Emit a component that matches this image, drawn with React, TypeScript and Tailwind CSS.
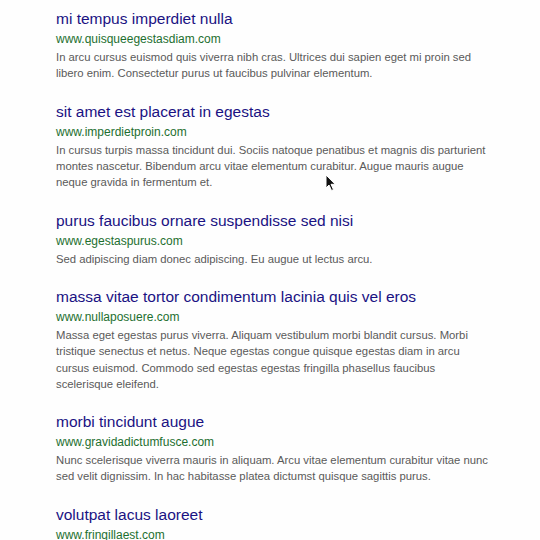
import React from "react";

const items = [
  {
    title: "mi tempus imperdiet nulla",
    url: "www.quisqueegestasdiam.com",
    body: [
      "In arcu cursus euismod quis viverra nibh cras. Ultrices dui sapien eget mi proin sed",
      "libero enim. Consectetur purus ut faucibus pulvinar elementum.",
    ],
  },
  {
    title: "sit amet est placerat in egestas",
    url: "www.imperdietproin.com",
    body: [
      "In cursus turpis massa tincidunt dui. Sociis natoque penatibus et magnis dis parturient",
      "montes nascetur. Bibendum arcu vitae elementum curabitur. Augue mauris augue",
      "neque gravida in fermentum et.",
    ],
  },
  {
    title: "purus faucibus ornare suspendisse sed nisi",
    url: "www.egestaspurus.com",
    body: ["Sed adipiscing diam donec adipiscing. Eu augue ut lectus arcu."],
  },
  {
    title: "massa vitae tortor condimentum lacinia quis vel eros",
    url: "www.nullaposuere.com",
    body: [
      "Massa eget egestas purus viverra. Aliquam vestibulum morbi blandit cursus. Morbi",
      "tristique senectus et netus. Neque egestas congue quisque egestas diam in arcu",
      "cursus euismod. Commodo sed egestas egestas fringilla phasellus faucibus",
      "scelerisque eleifend.",
    ],
  },
  {
    title: "morbi tincidunt augue",
    url: "www.gravidadictumfusce.com",
    body: [
      "Nunc scelerisque viverra mauris in aliquam. Arcu vitae elementum curabitur vitae nunc",
      "sed velit dignissim. In hac habitasse platea dictumst quisque sagittis purus.",
    ],
  },
  {
    title: "volutpat lacus laoreet",
    url: "www.fringillaest.com",
    body: [] as string[],
  },
];

export default function App() {
  return (
    <div
      className="relative w-[540px] h-[540px] overflow-hidden bg-[#fefefe] pt-[9px] pl-[56px]"
      style={{ fontFamily: '"Liberation Sans", Arial, sans-serif' }}
    >
      <div className="flex flex-col gap-[20.3px] w-[460px]">
        {items.map((it) => (
          <div key={it.url} className="flex flex-col">
            <div className="text-[15.5px] leading-[20px] text-[#1a1283] whitespace-nowrap">{it.title}</div>
            <div className="mt-[2px] text-[12px] leading-[16px] text-[#1d6f2f] whitespace-nowrap">{it.url}</div>
            {it.body.length > 0 && (
              <div className="mt-[2px] text-[11.3px] leading-[16.2px] text-[#5a5a5a]">
                {it.body.map((l) => (
                  <div key={l} className="whitespace-nowrap">{l}</div>
                ))}
              </div>
            )}
          </div>
        ))}
      </div>
      <svg
        className="absolute left-[325px] top-[174px]"
        width="12"
        height="18"
        viewBox="0 0 12 18"
      >
        <path d="M1 1 L1 14 L4 11 L6.5 16.5 L8.5 15.6 L6 10.3 L10.2 10.3 Z" fill="#111" stroke="#fff" strokeWidth="1" />
      </svg>
    </div>
  );
}
